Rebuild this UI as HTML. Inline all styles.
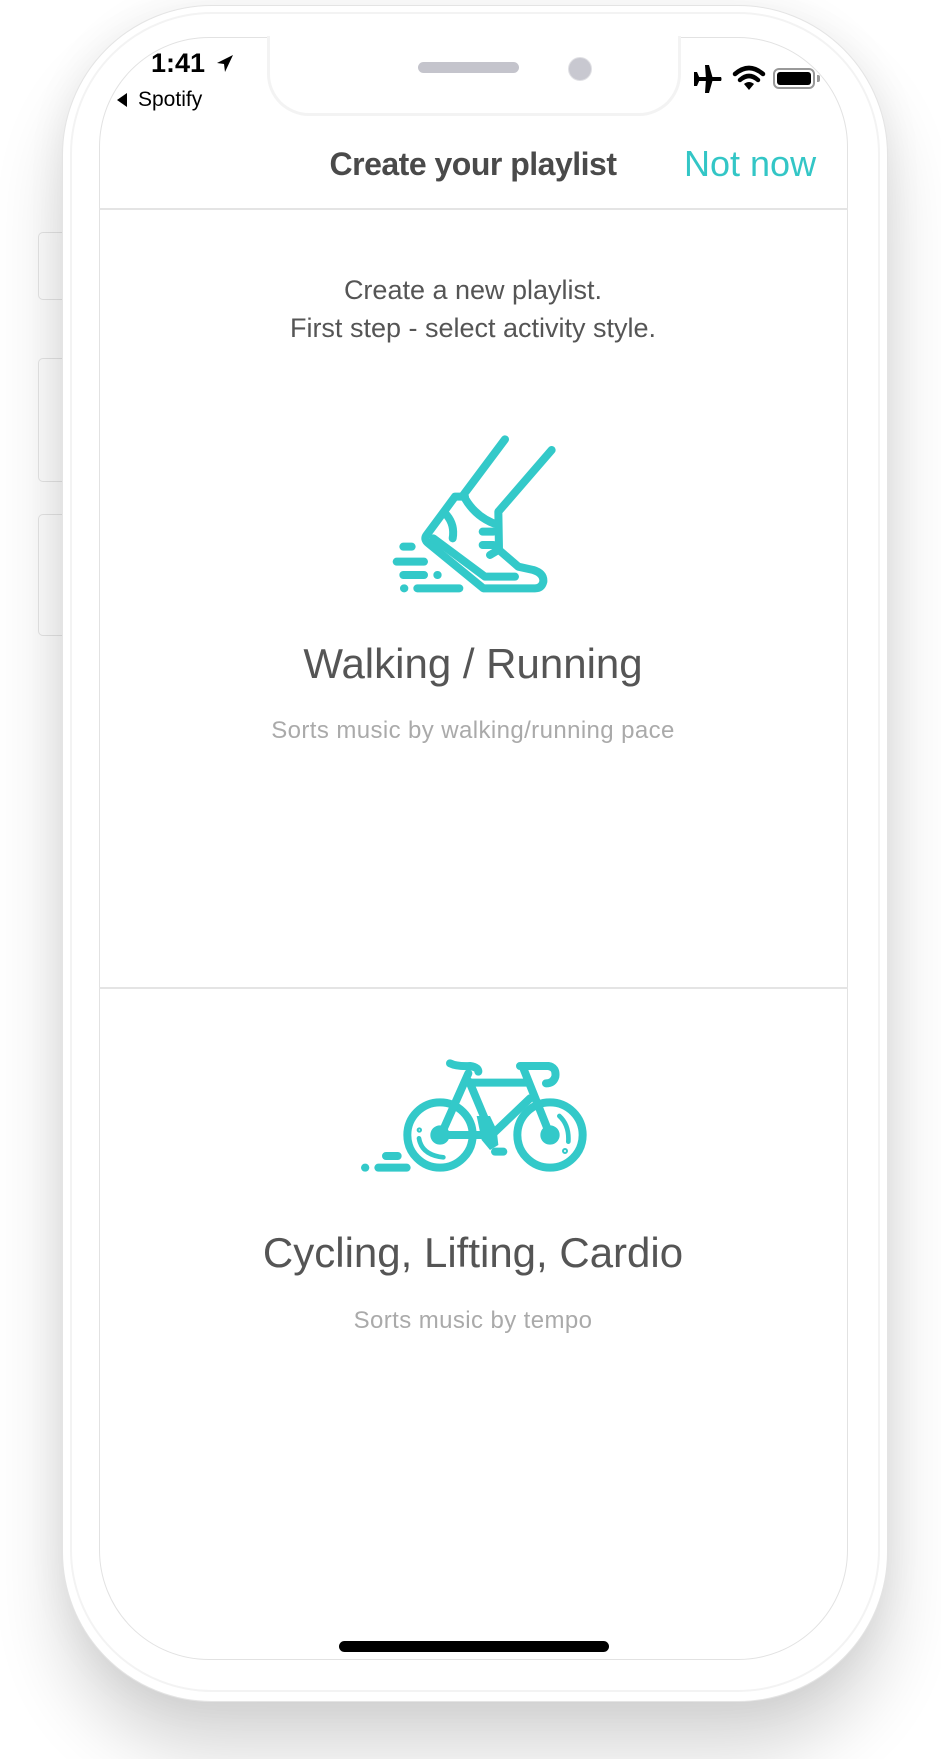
<!DOCTYPE html>
<html><head><meta charset="utf-8"><style>
html,body{margin:0;padding:0;}
body{width:941px;height:1759px;position:relative;overflow:hidden;background:#fff;font-family:"Liberation Sans",sans-serif;}
.abs{position:absolute;}
.phone{left:62px;top:5px;width:826px;height:1697px;border-radius:150px;background:#fff;border:1px solid #e4e4e4;box-sizing:border-box;box-shadow:0 50px 70px rgba(0,0,0,0.16),0 0 40px rgba(0,0,0,0.06);}
.inner{left:70px;top:12px;width:810px;height:1680px;border-radius:142px;border:2px solid #f3f3f3;box-sizing:border-box;}
.btn{left:38px;width:26px;background:#fff;border:1px solid #e6e6e6;border-radius:5px 0 0 5px;box-sizing:border-box;}
.screen{left:99px;top:37px;width:749px;height:1623px;border-radius:110px;background:#fff;border:1px solid #e2e2e2;box-sizing:border-box;}
.notch{left:267px;top:36px;width:414px;height:80px;background:#fff;border:3px solid #f3f3f3;border-top:none;border-radius:0 0 42px 42px;box-sizing:border-box;}
.c{left:0;width:946px;text-align:center;}
</style></head><body>
<div class="abs btn" style="top:232px;height:68px"></div>
<div class="abs btn" style="top:358px;height:124px"></div>
<div class="abs btn" style="top:514px;height:122px"></div>
<div class="abs phone"></div>
<div class="abs inner"></div>
<div class="abs screen"></div>
<div class="abs notch"></div>
<div class="abs" style="left:418px;top:62px;width:101px;height:11px;border-radius:6px;background:#c4c4cc"></div>
<div class="abs" style="left:568px;top:57px;width:22px;height:22px;border-radius:50%;background:#c8c8d0;border:1px solid #e0e0e4"></div>
<div class="abs" style="left:151px;top:48px;font-size:27px;font-weight:bold;color:#000">1:41</div>
<svg class="abs" style="left:215px;top:53px" width="20" height="22" viewBox="0 0 20 22"><path d="M18 2 L2 10 L9 11 L10 19 Z" fill="#000"/></svg>
<svg class="abs" style="left:116px;top:92px" width="12" height="16"><path d="M11 1 L1 8 L11 15 Z" fill="#000"/></svg>
<div class="abs" style="left:138px;top:88px;font-size:21px;color:#000">Spotify</div>
<svg class="abs" style="left:692px;top:64px" width="32" height="30" viewBox="0 0 32 30"><path d="M3 13 H29 Q30 15 29 17 H3 Z M13 1 L17 1 L21 15 L17 29 L13 29 L14 15 Z M2 8 L5 8 L8 15 L5 22 L2 22 Z" fill="#000"/></svg>
<svg class="abs" style="left:732px;top:64px" width="34" height="28" viewBox="0 0 34 28"><path d="M3 10 Q17 -2 31 10" stroke="#000" stroke-width="4.5" fill="none" stroke-linecap="round"/><path d="M8 16 Q17 8 26 16" stroke="#000" stroke-width="4.5" fill="none" stroke-linecap="round"/><path d="M12 20 L17 26 L22 20 Q17 16 12 20Z" fill="#000"/></svg>
<div class="abs" style="left:773px;top:68px;width:42px;height:21px;border:2px solid #999;border-radius:6px;box-sizing:border-box"></div>
<div class="abs" style="left:777px;top:72px;width:34px;height:13px;background:#000;border-radius:3px"></div>
<div class="abs" style="left:817px;top:75px;width:3px;height:7px;background:#999;border-radius:0 2px 2px 0"></div>
<div class="abs" style="left:273px;top:146px;width:400px;text-align:center;font-size:32px;font-weight:bold;color:#4a4a4a;letter-spacing:-0.5px">Create your playlist</div>
<div class="abs" style="left:684px;top:143px;font-size:36px;color:#33c6c6">Not now</div>
<div class="abs" style="left:99px;top:208px;width:749px;height:2px;background:#e4e4e4"></div>
<div class="abs c" style="top:271px;font-size:27px;color:#555;line-height:38px">Create a new playlist.<br>First step - select activity style.</div>
<svg class="abs" style="left:300px;top:400px" width="360" height="240" viewBox="0 0 1080 720"><g stroke="#33c9c9" stroke-width="24" fill="none" stroke-linecap="round" stroke-linejoin="round">
<path d="M615 118 L520 245 L490 285"/>
<path d="M755 150 L595 335 L597 450 L655 500 L700 510 Q732 520 730 545 Q725 565 705 565 L550 565 L385 430 Q370 418 380 405 L465 290 L495 290"/>
<path d="M495 295 Q530 355 595 375"/>
<path d="M400 415 L555 530 L645 530"/>
<path d="M440 345 Q465 375 458 415"/>
<path d="M548 395 L580 395 M548 435 L580 435 M570 465 L595 450"/>
<path d="M310 440 L335 440 M290 485 L372 485 M310 525 L372 525 M412 525 L413 525 M312 565 L313 565 M352 565 L478 565"/>
</g></svg>
<div class="abs c" style="top:640px;font-size:42px;color:#555">Walking / Running</div>
<div class="abs c" style="top:717px;font-size:24px;color:#aaa;letter-spacing:0.4px">Sorts music by walking/running pace</div>
<div class="abs" style="left:99px;top:987px;width:749px;height:2px;background:#e4e4e4"></div>
<svg class="abs" style="left:300px;top:1030px" width="360" height="200" viewBox="0 0 1080 600"><g stroke="#33c9c9" stroke-width="24" fill="none" stroke-linecap="round" stroke-linejoin="round">
<circle cx="420" cy="315" r="98"/><circle cx="750" cy="315" r="98"/>
<circle cx="420" cy="315" r="20" stroke-width="18"/><circle cx="750" cy="315" r="20" stroke-width="18"/>
<path d="M357 325 Q365 375 430 382" stroke-width="14"/><path d="M778 258 Q808 285 805 335" stroke-width="14"/>
<path d="M450 100 Q470 110 510 108 Q535 112 535 125"/>
<path d="M505 130 L425 310 M500 158 L680 158 M660 108 L745 108 Q770 112 766 140 Q760 160 738 160 M668 110 L750 315 M690 205 L575 315 L420 315 M508 155 L575 315 M585 365 L610 365"/>
<path d="M195 413 L196 413 M235 413 L320 413 M258 378 L293 378"/>
<circle cx="358" cy="300" r="3" stroke-width="10"/><circle cx="795" cy="363" r="3" stroke-width="12"/>
</g><path d="M530 258 L570 258 L590 300 L595 345 L570 360 L545 330 Z" fill="#33c9c9"/></svg>
<div class="abs c" style="top:1229px;font-size:42px;color:#555">Cycling, Lifting, Cardio</div>
<div class="abs c" style="top:1307px;font-size:24px;color:#aaa;letter-spacing:0.4px">Sorts music by tempo</div>
<div class="abs" style="left:339px;top:1641px;width:270px;height:11px;border-radius:6px;background:#000"></div>
</body></html>
